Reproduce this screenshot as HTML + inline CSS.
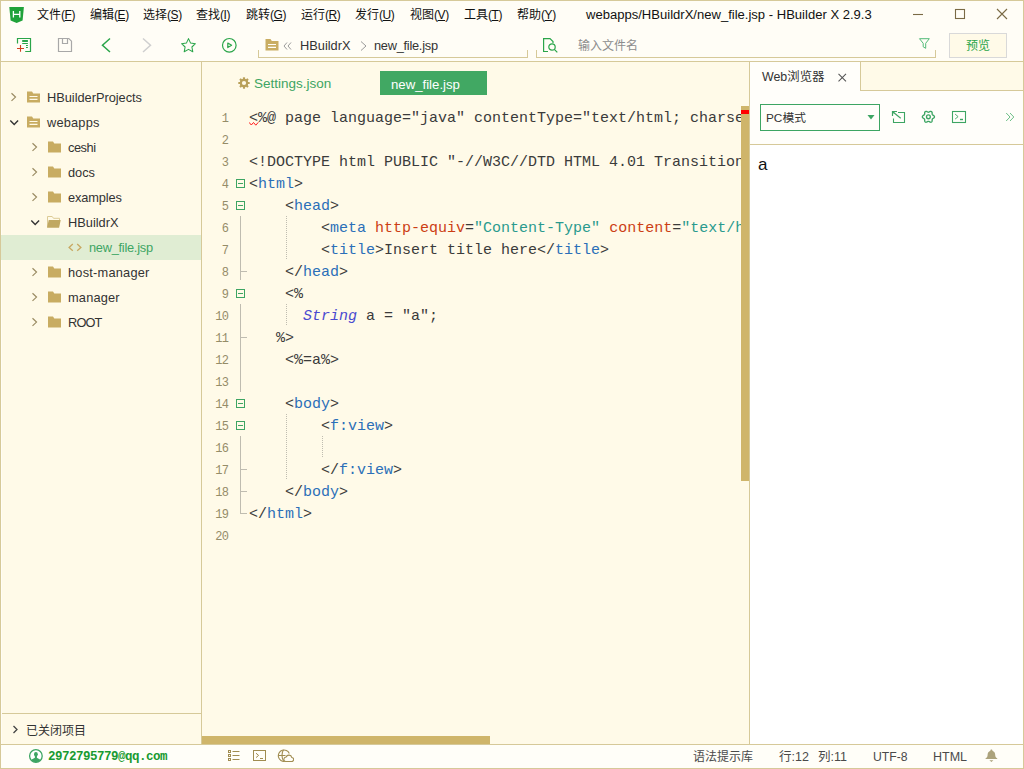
<!DOCTYPE html>
<html lang="zh">
<head>
<meta charset="utf-8">
<title>webapps/HBuildrX/new_file.jsp - HBuilder X 2.9.3</title>
<style>
*{box-sizing:border-box;margin:0;padding:0}
html,body{width:1024px;height:769px;overflow:hidden;background:#fffdf6}
body{position:relative;font-family:"Liberation Sans","Noto Sans CJK SC",sans-serif;font-size:13px;color:#333}
.abs{position:absolute}
#win{position:absolute;left:0;top:0;width:1024px;height:769px;border:1px solid #d6c999;background:transparent;z-index:50;pointer-events:none}
.t{position:absolute;white-space:nowrap;line-height:1}
/* top */
#top{position:absolute;left:0;top:0;width:1024px;height:61px;background:#fffdf6}
.menu{position:absolute;top:8px;font-size:12px;color:#111;white-space:nowrap;line-height:15px}
.menu u{text-decoration:underline;text-underline-offset:1px}
.menu i{font-style:normal;font-size:12px;letter-spacing:-0.45px}
#title{position:absolute;left:586px;top:7px;font-size:13.05px;color:#111;line-height:16px;white-space:nowrap}
#hline{position:absolute;left:0;top:61px;width:1024px;height:1px;background:#d6c999}
/* sidebar */
#side{position:absolute;left:2px;top:62px;width:199px;height:683px;background:#fffae8}
#sideline{position:absolute;left:201px;top:62px;width:1px;height:683px;background:#d6c999}
.row{position:absolute;left:0;width:199px;height:25px}
.row .lbl{position:absolute;top:5px;font-size:12.8px;line-height:16px;color:#333;white-space:nowrap}
.sel{background:#e0edd3;box-shadow:-1px 0 0 #e0edd3}
/* editor */
#ed{position:absolute;left:202px;top:62px;width:547px;height:683px;background:#fffae8;overflow:hidden}
.ln{position:absolute;left:0;width:26.400px;text-align:right;font-family:"Liberation Mono",monospace;font-size:12px;letter-spacing:-0.600px;color:#958c68;line-height:22px;height:22px;margin-top:2px}
.code{position:absolute;left:47px;font-family:"Liberation Mono","DejaVu Sans Mono",monospace;font-size:15px;line-height:22px;height:22px;white-space:pre;color:#3b3b3b;margin-top:2px}
.tg{color:#2b6fb8}.at{color:#cc3e14}.st{color:#2a9a8e}.kw{color:#4a4ad0;font-style:italic}
/* right */
#rp{position:absolute;left:750px;top:62px;width:273px;height:683px;background:#fffefa}
#rpline{position:absolute;left:749px;top:62px;width:1px;height:683px;background:#d6c999}
/* status */
#status{position:absolute;left:1px;top:744px;width:1022px;height:24px;background:#fffef8;border-top:1px solid #d6c999}
#status .s{position:absolute;top:5px;font-size:12.5px;line-height:15px;color:#4a4a4a;white-space:nowrap}
</style>
</head>
<body>
<div id="top">
<svg class="abs" style="left:9px;top:6px" width="16" height="18" viewBox="0 0 16 18"><path d="M0.300 1h14.600l-1.300 13.400L7.600 17l-6-2.600z" fill="#20a23a"/><path d="M4.400 5v6.500M10.800 5v6.500M4.400 8.300h6.400" stroke="#fff" stroke-width="1.300" fill="none"/></svg>
<span class="menu" style="left:37px">文件<i>(<u>F</u>)</i></span>
<span class="menu" style="left:90px">编辑<i>(<u>E</u>)</i></span>
<span class="menu" style="left:143px">选择<i>(<u>S</u>)</i></span>
<span class="menu" style="left:196px">查找<i>(<u>I</u>)</i></span>
<span class="menu" style="left:246px">跳转<i>(<u>G</u>)</i></span>
<span class="menu" style="left:301px">运行<i>(<u>R</u>)</i></span>
<span class="menu" style="left:355px">发行<i>(<u>U</u>)</i></span>
<span class="menu" style="left:410px">视图<i>(<u>V</u>)</i></span>
<span class="menu" style="left:464px">工具<i>(<u>T</u>)</i></span>
<span class="menu" style="left:517px">帮助<i>(<u>Y</u>)</i></span>
<span id="title">webapps/HBuildrX/new_file.jsp - HBuilder X 2.9.3</span>
<svg class="abs" style="left:905px;top:4px" width="110" height="20" viewBox="0 0 110 20" fill="none" stroke="#7a6a45" stroke-width="1.1"><path d="M8 10.5h10"/><rect x="50.5" y="5.5" width="9" height="9"/><path d="M92 5l10 10M102 5l-10 10"/></svg>
<!-- toolbar icons -->
<svg class="abs" style="left:16px;top:37px" width="17" height="17" viewBox="0 0 17 17" fill="none"><path d="M1.500 6.600V1.500H14.500V14.500H9.200" stroke="#2aa54a" stroke-width="1.200"/><path d="M6.200 4h5.700" stroke="#2aa54a" stroke-width="2"/><path d="M6.200 6.500h5.700M10 8.500h1.900M10 10.500h1.900" stroke="#2aa54a" stroke-width="1"/><path d="M4.500 8.100v6.700M1 11.500h7" stroke="#d2401f" stroke-width="1.100"/></svg>
<svg class="abs" style="left:57px;top:37px" width="17" height="17" viewBox="0 0 17 17" fill="none" stroke="#a8a8a8" stroke-width="1.200"><path d="M1.500 1.500h10.300l2.700 2.700v10.300H1.500z"/><path d="M5.500 1.500v5h5v-5"/></svg>
<svg class="abs" style="left:100px;top:37px" width="12" height="17" viewBox="0 0 12 17" fill="none" stroke="#2aa54a" stroke-width="1.5"><path d="M10 1.5L2.5 8.2 10 15"/></svg>
<svg class="abs" style="left:141px;top:37px" width="12" height="17" viewBox="0 0 12 17" fill="none" stroke="#cfcfcf" stroke-width="1.5"><path d="M2 1.5l7.5 6.7L2 15"/></svg>
<svg class="abs" style="left:180px;top:37px" width="17" height="17" viewBox="0 0 17 17" fill="none" stroke="#2aa54a" stroke-width="1.050" stroke-linejoin="round"><path d="M8.5 1.6l2.1 4.5 4.8.6-3.5 3.3.9 4.8-4.3-2.4-4.3 2.4.9-4.8L1.6 6.700l4.8-.6z"/></svg>
<svg class="abs" style="left:221px;top:37px" width="17" height="17" viewBox="0 0 17 17" fill="none" stroke="#2aa54a" stroke-width="1.2"><circle cx="8.3" cy="8.3" r="6.8"/><path d="M6.800 6l3.800 2.300-3.800 2.300z" stroke-linejoin="round"/></svg>
<!-- breadcrumb -->
<div class="abs" style="left:258px;top:50px;width:270px;height:8px;border:1px solid #d6c999;border-top:none"></div>
<svg class="abs" style="left:265px;top:38px" width="14" height="13" viewBox="0 0 14 13"><path d="M0.500 1h5l1.300 2H13.500v9.500H0.500z" fill="#c9ad62"/><path d="M3 6.500h8M3 9.300h8" stroke="#fffdf6" stroke-width="1.2"/></svg>
<svg class="abs" style="left:283px;top:42px" width="9" height="8" viewBox="0 0 9 8" fill="none" stroke="#9a9a9a" stroke-width="1"><path d="M4 0.500L1 4l3 3.500M8 0.500L5 4l3 3.500"/></svg>
<span class="t" style="left:300px;top:40px;font-size:12.800px;color:#333">HBuildrX</span>
<svg class="abs" style="left:360px;top:41px" width="7" height="10" viewBox="0 0 7 10" fill="none" stroke="#9a9a9a" stroke-width="1"><path d="M1 0.500l5 4.500-5 4.500"/></svg>
<span class="t" style="left:374px;top:40px;font-size:12.800px;letter-spacing:-0.260px;color:#333">new_file.jsp</span>
<!-- search -->
<div class="abs" style="left:536px;top:50px;width:400px;height:8px;border:1px solid #d6c999;border-top:none"></div>
<svg class="abs" style="left:542px;top:37px" width="17" height="17" viewBox="0 0 17 17" fill="none" stroke="#2aa54a" stroke-width="1.200"><path d="M6 14.500H1.600V1.600h6.400l3 3V6"/><circle cx="10" cy="10" r="3.200"/><path d="M12.300 12.300l3 3"/></svg>
<span class="t" style="left:578px;top:40px;font-size:12px;color:#8c8c8c">输入文件名</span>
<svg class="abs" style="left:918px;top:37px" width="13" height="13" viewBox="0 0 13 13" fill="none" stroke="#52bb78" stroke-width="1" stroke-linejoin="round"><path d="M1.500 1.700h9.800L7.700 6.300v5L5.200 9.800V6.300z"/></svg>
<div class="abs" style="left:949px;top:33px;width:58px;height:25px;border:1px solid #d9d9d9;background:#fffae8"></div>
<span class="t" style="left:966px;top:40px;font-size:12px;color:#2aa54a">预览</span>
</div>
<div id="hline"></div>
<div id="side">
<div class="row" style="top:23px"><svg class="abs" style="left:8px;top:7px" width="8" height="11" viewBox="0 0 8 11" fill="none" stroke="#9a8b62" stroke-width="1.200"><path d="M1.500 1.300l4 3.800-4 3.800"/></svg><svg class="abs" style="left:25px;top:6px" width="13" height="12" viewBox="0 0 13 12"><path d="M0 0.500h5l1.300 2H13V11.500H0z" fill="#c8ac62"/><path d="M2.500 5.500h8M2.500 8.300h8" stroke="#fffae8" stroke-width="1.200"/></svg><span class="lbl" style="left:45px;letter-spacing:-0.02px">HBuilderProjects</span></div>
<div class="row" style="top:48px"><svg class="abs" style="left:7px;top:9px" width="11" height="8" viewBox="0 0 11 8" fill="none" stroke="#333" stroke-width="1.400"><path d="M1.300 1.500l3.900 4 3.900-4"/></svg><svg class="abs" style="left:25px;top:6px" width="13" height="12" viewBox="0 0 13 12"><path d="M0 0.500h5l1.300 2H13V11.500H0z" fill="#c8ac62"/><path d="M2.500 5.500h8M2.500 8.300h8" stroke="#fffae8" stroke-width="1.200"/></svg><span class="lbl" style="left:45px;letter-spacing:0.19px">webapps</span></div>
<div class="row" style="top:73px"><svg class="abs" style="left:29px;top:7px" width="8" height="11" viewBox="0 0 8 11" fill="none" stroke="#9a8b62" stroke-width="1.200"><path d="M1.500 1.300l4 3.800-4 3.800"/></svg><svg class="abs" style="left:46px;top:6px" width="13" height="12" viewBox="0 0 13 12"><path d="M0 0.500h5l1.300 2H13V11.500H0z" fill="#c8ac62"/></svg><span class="lbl" style="left:66px;letter-spacing:-0.47px">ceshi</span></div>
<div class="row" style="top:98px"><svg class="abs" style="left:29px;top:7px" width="8" height="11" viewBox="0 0 8 11" fill="none" stroke="#9a8b62" stroke-width="1.200"><path d="M1.500 1.300l4 3.800-4 3.800"/></svg><svg class="abs" style="left:46px;top:6px" width="13" height="12" viewBox="0 0 13 12"><path d="M0 0.500h5l1.300 2H13V11.500H0z" fill="#c8ac62"/></svg><span class="lbl" style="left:66px;letter-spacing:-0.01px">docs</span></div>
<div class="row" style="top:123px"><svg class="abs" style="left:29px;top:7px" width="8" height="11" viewBox="0 0 8 11" fill="none" stroke="#9a8b62" stroke-width="1.200"><path d="M1.500 1.300l4 3.800-4 3.800"/></svg><svg class="abs" style="left:46px;top:6px" width="13" height="12" viewBox="0 0 13 12"><path d="M0 0.500h5l1.300 2H13V11.500H0z" fill="#c8ac62"/></svg><span class="lbl" style="left:66px;letter-spacing:-0.11px">examples</span></div>
<div class="row" style="top:148px"><svg class="abs" style="left:28px;top:9px" width="11" height="8" viewBox="0 0 11 8" fill="none" stroke="#333" stroke-width="1.400"><path d="M1.300 1.500l3.900 4 3.900-4"/></svg><svg class="abs" style="left:45px;top:6px" width="15" height="12" viewBox="0 0 15 12"><path d="M0.500 11V0.500h4.700l1.300 1.800h6V4" fill="none" stroke="#dccb96" stroke-width="1"/><path d="M1.700 3.900H13.700L12.100 11.800H0z" fill="#c0a862"/></svg><span class="lbl" style="left:66px;letter-spacing:0.0px">HBuildrX</span></div>
<div class="row sel" style="top:173px"><svg class="abs" style="left:66px;top:8px" width="15" height="9" viewBox="0 0 15 9" fill="none" stroke="#c8a862" stroke-width="1.300"><path d="M4.800 1L1.100 4.400l3.700 3.400M9.200 1l3.700 3.400-3.700 3.400"/></svg><span class="lbl" style="left:87px;color:#3da563;letter-spacing:-0.26px">new_file.jsp</span></div>
<div class="row" style="top:198px"><svg class="abs" style="left:29px;top:7px" width="8" height="11" viewBox="0 0 8 11" fill="none" stroke="#9a8b62" stroke-width="1.200"><path d="M1.500 1.300l4 3.800-4 3.800"/></svg><svg class="abs" style="left:46px;top:6px" width="13" height="12" viewBox="0 0 13 12"><path d="M0 0.500h5l1.300 2H13V11.500H0z" fill="#c8ac62"/></svg><span class="lbl" style="left:66px;letter-spacing:0.22px">host-manager</span></div>
<div class="row" style="top:223px"><svg class="abs" style="left:29px;top:7px" width="8" height="11" viewBox="0 0 8 11" fill="none" stroke="#9a8b62" stroke-width="1.200"><path d="M1.500 1.300l4 3.800-4 3.800"/></svg><svg class="abs" style="left:46px;top:6px" width="13" height="12" viewBox="0 0 13 12"><path d="M0 0.500h5l1.300 2H13V11.500H0z" fill="#c8ac62"/></svg><span class="lbl" style="left:66px;letter-spacing:0.18px">manager</span></div>
<div class="row" style="top:248px"><svg class="abs" style="left:29px;top:7px" width="8" height="11" viewBox="0 0 8 11" fill="none" stroke="#9a8b62" stroke-width="1.200"><path d="M1.500 1.300l4 3.800-4 3.800"/></svg><svg class="abs" style="left:46px;top:6px" width="13" height="12" viewBox="0 0 13 12"><path d="M0 0.500h5l1.300 2H13V11.500H0z" fill="#c8ac62"/></svg><span class="lbl" style="left:66px;letter-spacing:-0.86px">ROOT</span></div>
<div class="abs" style="left:0;top:651px;width:199px;height:1px;background:#d6c999"></div>
<svg class="abs" style="left:10px;top:663px" width="7" height="9" viewBox="0 0 7 9" fill="none" stroke="#444" stroke-width="1.300"><path d="M1.500 1l3.500 3.500L1.500 8"/></svg>
<span class="t" style="left:24px;top:663px;font-size:12px;color:#333">已关闭项目</span>
</div>
<div id="sideline"></div>
<div id="ed">
<svg class="abs" style="left:36px;top:15px" width="12" height="12" viewBox="0 0 13 13"><g fill="#b89f58"><circle cx="6.500" cy="6.500" r="4.600"/><g><rect x="5.300" y="0.300" width="2.400" height="12.400" rx="0.500"/><rect x="5.300" y="0.300" width="2.400" height="12.400" rx="0.500" transform="rotate(45 6.500 6.500)"/><rect x="5.300" y="0.300" width="2.400" height="12.400" rx="0.500" transform="rotate(90 6.500 6.500)"/><rect x="5.300" y="0.300" width="2.400" height="12.400" rx="0.500" transform="rotate(135 6.500 6.500)"/></g></g><circle cx="6.500" cy="6.500" r="2.300" fill="#fffae8"/></svg>
<span class="t" style="left:52px;top:15px;font-size:13.500px;color:#3da563">Settings.json</span>
<div class="abs" style="left:178px;top:9px;width:107px;height:24px;background:#41a863"></div>
<span class="t" style="left:189px;top:16px;font-size:13.200px;color:#fff">new_file.jsp</span>
<div class="ln" style="top:44px">1</div>
<div class="code" style="top:44px">&lt;%@ page language=&quot;java&quot; contentType=&quot;text/html; charset=UTF-8&quot; pageEncoding=&quot;UTF-8&quot;%&gt;</div>
<div class="ln" style="top:66px">2</div>
<div class="ln" style="top:88px">3</div>
<div class="code" style="top:88px">&lt;!DOCTYPE html PUBLIC &quot;-//W3C//DTD HTML 4.01 Transitional//EN&quot;&gt;</div>
<div class="ln" style="top:110px">4</div>
<div class="code" style="top:110px">&lt;<span class="tg">html</span>&gt;</div>
<div class="ln" style="top:132px">5</div>
<div class="code" style="top:132px">    &lt;<span class="tg">head</span>&gt;</div>
<div class="ln" style="top:154px">6</div>
<div class="code" style="top:154px">        &lt;<span class="tg">meta</span> <span class="at">http-equiv</span>=<span class="st">&quot;Content-Type&quot;</span> <span class="at">content</span>=<span class="st">&quot;text/html; charset=UTF-8&quot;</span>&gt;</div>
<div class="ln" style="top:176px">7</div>
<div class="code" style="top:176px">        &lt;<span class="tg">title</span>&gt;Insert title here&lt;/<span class="tg">title</span>&gt;</div>
<div class="ln" style="top:198px">8</div>
<div class="code" style="top:198px">    &lt;/<span class="tg">head</span>&gt;</div>
<div class="ln" style="top:220px">9</div>
<div class="code" style="top:220px">    &lt;%</div>
<div class="ln" style="top:242px">10</div>
<div class="code" style="top:242px">      <span class="kw">String</span> a = &quot;a&quot;;</div>
<div class="ln" style="top:264px">11</div>
<div class="code" style="top:264px">   %&gt;</div>
<div class="ln" style="top:286px">12</div>
<div class="code" style="top:286px">    &lt;%=a%&gt;</div>
<div class="ln" style="top:308px">13</div>
<div class="ln" style="top:330px">14</div>
<div class="code" style="top:330px">    &lt;<span class="tg">body</span>&gt;</div>
<div class="ln" style="top:352px">15</div>
<div class="code" style="top:352px">        &lt;<span class="tg">f:view</span>&gt;</div>
<div class="ln" style="top:374px">16</div>
<div class="ln" style="top:396px">17</div>
<div class="code" style="top:396px">        &lt;/<span class="tg">f:view</span>&gt;</div>
<div class="ln" style="top:418px">18</div>
<div class="code" style="top:418px">    &lt;/<span class="tg">body</span>&gt;</div>
<div class="ln" style="top:440px">19</div>
<div class="code" style="top:440px">&lt;/<span class="tg">html</span>&gt;</div>
<div class="ln" style="top:462px">20</div>
<svg class="abs" style="left:34px;top:117px" width="9" height="9" viewBox="0 0 9 9" fill="none" stroke="#3da563" stroke-width="1"><rect x="0.500" y="0.500" width="8" height="8"/><path d="M2 4.500h5"/></svg>
<svg class="abs" style="left:34px;top:139px" width="9" height="9" viewBox="0 0 9 9" fill="none" stroke="#3da563" stroke-width="1"><rect x="0.500" y="0.500" width="8" height="8"/><path d="M2 4.500h5"/></svg>
<svg class="abs" style="left:34px;top:227px" width="9" height="9" viewBox="0 0 9 9" fill="none" stroke="#3da563" stroke-width="1"><rect x="0.500" y="0.500" width="8" height="8"/><path d="M2 4.500h5"/></svg>
<svg class="abs" style="left:34px;top:337px" width="9" height="9" viewBox="0 0 9 9" fill="none" stroke="#3da563" stroke-width="1"><rect x="0.500" y="0.500" width="8" height="8"/><path d="M2 4.500h5"/></svg>
<svg class="abs" style="left:34px;top:359px" width="9" height="9" viewBox="0 0 9 9" fill="none" stroke="#3da563" stroke-width="1"><rect x="0.500" y="0.500" width="8" height="8"/><path d="M2 4.500h5"/></svg>
<div class="abs" style="left:38px;top:154px;width:1px;height:64px;background:#bfbcb0"></div>
<div class="abs" style="left:38px;top:209px;width:7px;height:1px;background:#bfbcb0"></div>
<div class="abs" style="left:38px;top:242px;width:1px;height:88px;background:#bfbcb0"></div>
<div class="abs" style="left:38px;top:275px;width:7px;height:1px;background:#bfbcb0"></div>
<div class="abs" style="left:38px;top:374px;width:1px;height:78px;background:#bfbcb0"></div>
<div class="abs" style="left:38px;top:407px;width:7px;height:1px;background:#bfbcb0"></div>
<div class="abs" style="left:38px;top:429px;width:7px;height:1px;background:#bfbcb0"></div>
<div class="abs" style="left:38px;top:451px;width:7px;height:1px;background:#bfbcb0"></div>
<div class="abs" style="left:84px;top:154px;width:1px;height:44px;background:repeating-linear-gradient(to bottom,#bfbcb0 0 1px,transparent 1px 2px)"></div>
<div class="abs" style="left:84px;top:242px;width:1px;height:22px;background:repeating-linear-gradient(to bottom,#bfbcb0 0 1px,transparent 1px 2px)"></div>
<div class="abs" style="left:84px;top:352px;width:1px;height:66px;background:repeating-linear-gradient(to bottom,#bfbcb0 0 1px,transparent 1px 2px)"></div>
<div class="abs" style="left:120px;top:374px;width:1px;height:22px;background:repeating-linear-gradient(to bottom,#bfbcb0 0 1px,transparent 1px 2px)"></div>
<svg class="abs" style="left:47px;top:59px" width="10" height="5" viewBox="0 0 10 5" fill="none" stroke="#ff1a1a" stroke-width="1"><path d="M0 1.300l2.300 2.700 2.200-2.500 2.300 2.700 2.500-2.900"/></svg>
<div class="abs" style="left:539px;top:44px;width:8px;height:375px;background:#cfb56a"></div>
<div class="abs" style="left:539px;top:48px;width:8px;height:4px;background:#ff0000"></div>
<div class="abs" style="left:0;top:674px;width:288px;height:8px;background:#cfb56a"></div>
</div>
<div id="rpline"></div>
<div id="rp">
<div class="abs" style="left:110px;top:0;width:163px;height:29px;background:#fffae8;border-left:1px solid #d6c999;border-bottom:1px solid #d6c999"></div>
<span class="t" style="left:12px;top:9px;font-size:12.400px;color:#333">Web浏览器</span>
<svg class="abs" style="left:87px;top:10px" width="11" height="11" viewBox="0 0 11 11" fill="none" stroke="#555" stroke-width="1.050"><path d="M1.500 1.800l7.500 7.500M9 1.800l-7.500 7.500"/></svg>
<div class="abs" style="left:10px;top:42px;width:120px;height:27px;border:1px solid #3da563;background:#fffefa"></div>
<span class="t" style="left:16px;top:51px;font-size:11.800px;color:#333">PC模式</span>
<svg class="abs" style="left:117px;top:53px" width="8" height="5" viewBox="0 0 8 5"><path d="M0.500 0h7L4 4.500z" fill="#3da563"/></svg>
<svg class="abs" style="left:141px;top:48px" width="15" height="14" viewBox="0 0 15 14" fill="none" stroke="#3da563" stroke-width="1.100"><path d="M7 2.500H13.500V12.500H2.500V8.500"/><path d="M9.700 8.300L2 2"/><path d="M1.500 6V1.500H6" stroke-width="1.200"/><path d="M1.500 4.300V1.500H4.300z" fill="#3da563" stroke="none"/></svg>
<svg class="abs" style="left:171px;top:48px" width="15" height="14" viewBox="0 0 15 14" fill="none" stroke="#3da563" stroke-width="1.350" stroke-linejoin="round"><path d="M13.45 6.80 L13.35 7.32 L13.04 7.80 L12.52 8.17 L11.98 8.47 L11.60 8.76 L11.34 9.07 L11.19 9.46 L11.13 9.93 L11.15 10.55 L11.08 11.19 L10.82 11.69 L10.43 12.04 L9.92 12.21 L9.36 12.19 L8.77 11.92 L8.25 11.60 L7.80 11.41 L7.40 11.35 L7.00 11.41 L6.55 11.60 L6.03 11.92 L5.44 12.19 L4.88 12.21 L4.38 12.04 L3.98 11.69 L3.72 11.19 L3.65 10.55 L3.67 9.93 L3.61 9.46 L3.46 9.08 L3.20 8.76 L2.82 8.47 L2.28 8.17 L1.76 7.80 L1.45 7.32 L1.35 6.80 L1.45 6.28 L1.76 5.80 L2.28 5.43 L2.82 5.13 L3.20 4.84 L3.46 4.52 L3.61 4.14 L3.67 3.67 L3.65 3.05 L3.72 2.41 L3.98 1.91 L4.37 1.56 L4.88 1.39 L5.44 1.41 L6.03 1.68 L6.55 2.00 L7.00 2.19 L7.40 2.25 L7.80 2.19 L8.25 2.00 L8.77 1.68 L9.36 1.41 L9.92 1.39 L10.42 1.56 L10.82 1.91 L11.08 2.41 L11.15 3.05 L11.13 3.67 L11.19 4.14 L11.34 4.53 L11.60 4.84 L11.98 5.13 L12.52 5.43 L13.04 5.80 L13.35 6.28z"/><circle cx="7.400" cy="6.800" r="1.900"/></svg>
<svg class="abs" style="left:201px;top:48px" width="16" height="14" viewBox="0 0 16 14" fill="none" stroke="#3da563" stroke-width="1.100"><rect x="1.500" y="1.500" width="13" height="11"/><path d="M4.100 4.100l3 2.500-3 2.500" stroke-width="0.900"/><path d="M9 9.500h3" stroke-width="1.400"/></svg>
<svg class="abs" style="left:254px;top:50px" width="11" height="10" viewBox="0 0 11 10" fill="none" stroke="#63bb80" stroke-width="0.950"><path d="M2.200 1l3.800 4-3.800 4M6 1l3.800 4-3.800 4"/></svg>
<div class="abs" style="left:0;top:82px;width:273px;height:1px;background:#d6c999"></div>
<div class="abs" style="left:0;top:83px;width:273px;height:600px;background:#fff"></div>
<span class="t" style="left:8px;top:94px;font-size:17px;color:#111">a</span>
</div>
<div id="status">
<svg class="abs" style="left:27px;top:4px" width="16" height="15" viewBox="0 0 16 15"><circle cx="7.900" cy="7" r="6.300" fill="#fff" stroke="#3da563" stroke-width="1.300"/><ellipse cx="7.900" cy="5.300" rx="1.900" ry="2.400" fill="#3da563"/><path d="M3.400 11.300C4.200 9.500 6 9.500 6.900 8.700V7h2v1.700c.9.800 2.700.8 3.500 2.600A6.300 6.300 0 0 1 3.400 11.300z" fill="#3da563"/></svg>
<span class="abs" style="left:47px;top:4px;font-family:'Liberation Mono',monospace;font-weight:bold;font-size:12.500px;letter-spacing:-0.500px;color:#189a30;line-height:16px;white-space:nowrap">2972795779@qq.com</span>
<svg class="abs" style="left:226px;top:5px" width="14" height="12" viewBox="0 0 14 12" fill="none" stroke="#a08c50" stroke-width="1"><rect x="1.500" y="0.500" width="2" height="2"/><rect x="1.500" y="4.500" width="2" height="2"/><rect x="1.500" y="8.500" width="2" height="2"/><path d="M5.500 1.500h7M5.500 5.500h7M5.500 9.500h7"/></svg>
<svg class="abs" style="left:252px;top:5px" width="14" height="12" viewBox="0 0 14 12" fill="none" stroke="#a08c50" stroke-width="1"><rect x="0.500" y="0.500" width="12" height="10"/><path d="M3 3.200l2.600 2.200L3 7.600M7 8.500h3"/></svg>
<svg class="abs" style="left:276px;top:4px" width="17" height="14" viewBox="0 0 17 14" fill="none" stroke="#a08c50" stroke-width="1.100"><path d="M8 12.300A5.700 5.700 0 1 1 12.300 4.500"/><path d="M6.500 0.800c-2 3-2 8 0 11.300M1 6.500h7.500"/><path d="M8.500 12.500h6a2 2 0 0 0 .3-4 3 3 0 0 0-5.700-.5 2.300 2.300 0 0 0-.600 4.500z" fill="#fffef8"/></svg>
<span class="s" style="left:692px;font-size:12px">语法提示库</span>
<span class="s" style="left:778px">行:12</span>
<span class="s" style="left:817px">列:11</span>
<span class="s" style="left:872px;font-size:12.200px">UTF-8</span>
<span class="s" style="left:932px">HTML</span>
<svg class="abs" style="left:984px;top:4px" width="13" height="14" viewBox="0 0 13 14"><path d="M6.400 0.400c.6 0 1 .4 1 1v.3c1.800.6 2.800 2.200 2.800 4.100 0 2 .6 3 2.100 3.700v.5H.500v-.5C2 8.800 2.600 7.800 2.600 5.800c0-1.900 1-3.500 2.800-4.100v-.3c0-.6.400-1 1-1zM4.400 11.200h4l-2 1.800z" fill="#aca37c"/></svg>
</div>
<div id="win"></div>
</body>
</html>
